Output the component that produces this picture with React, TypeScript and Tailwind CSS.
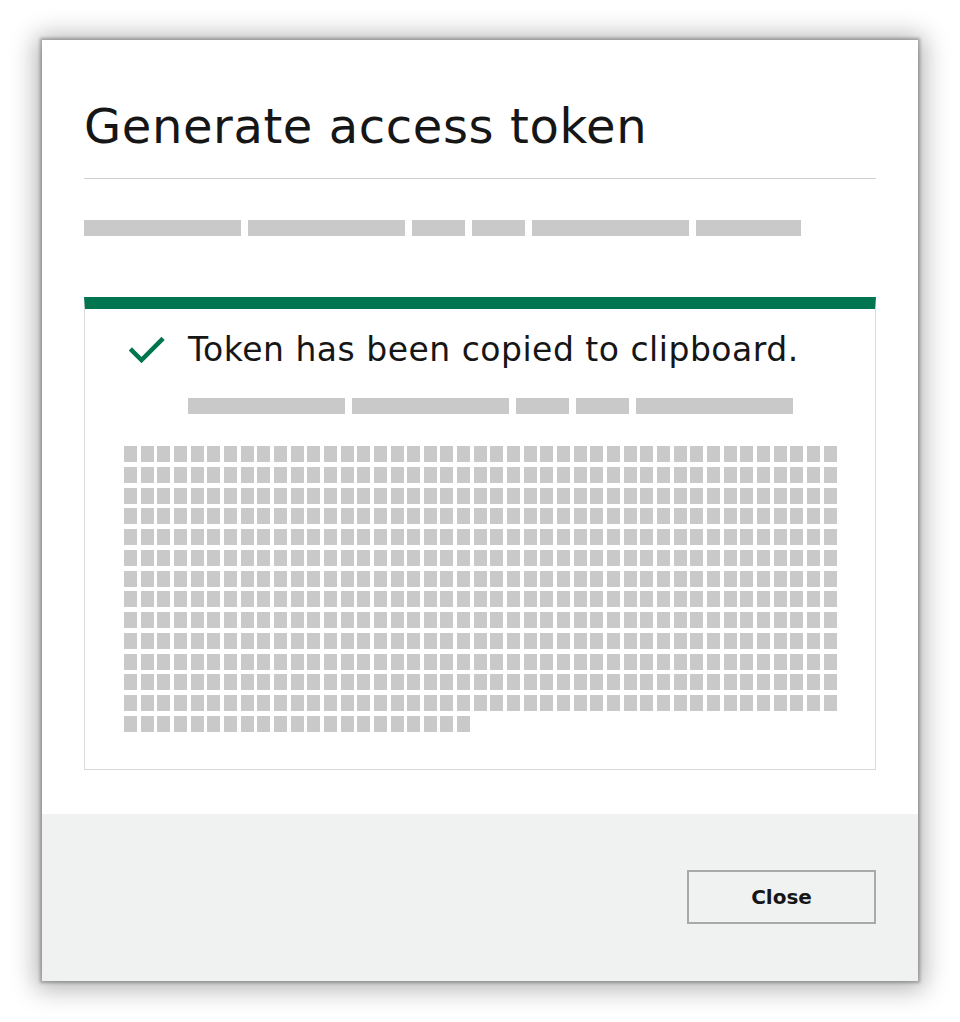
const font = { fontFamily: "'DejaVu Sans', 'Open Sans', sans-serif" };

function Redacted({ widths }: { widths: number[] }) {
  return (
    <div className="flex h-[16px] gap-[7.5px]">
      {widths.map((w, i) => (
        <div key={i} className="h-full bg-[#c9c9c9]" style={{ width: w }} />
      ))}
    </div>
  );
}

export default function App() {
  const blocks = 43 * 13 + 21;

  return (
    <div className="min-h-screen bg-white px-[42px] pt-[40px]" style={font}>
      <div className="w-[876px] bg-white shadow-[0_0_3px_2px_rgba(0,0,0,0.28),0_2px_24px_6px_rgba(0,0,0,0.3)]">
        <div className="px-[42px] pt-[56px] pb-[44px]">
          <h1 className="border-b border-[#cfcfcf] pb-[22px] text-[48px] leading-[60px] font-normal tracking-[0.6px] text-[#161616]">
            Generate access token
          </h1>

          <div className="mt-[41px]">
            <Redacted widths={[156.5, 156.5, 52.5, 52.5, 156.5, 104.5]} />
          </div>

          <div className="mt-[61px] border border-t-[12px] border-[#d9d9d9] border-t-[#00754f] pb-[37px]">
            <div className="flex items-center pt-[21px] pl-[44px]">
              <svg width="36" height="28" viewBox="0 0 36 28" className="shrink-0" fill="none">
                <path d="M3 14.5 L12.5 24 L32.5 4" stroke="#00754f" strokeWidth="4.5" strokeLinecap="square" />
              </svg>
              <span className="ml-[23px] text-[33px] leading-[40px] tracking-[0.5px] text-[#161616]">
                Token has been copied to clipboard.
              </span>
            </div>

            <div className="mt-[28px] pl-[103px]">
              <Redacted widths={[156.5, 156.5, 52.5, 52.5, 156.5]} />
            </div>

            <div className="mt-[32px] grid grid-cols-[repeat(43,13px)] gap-x-[3.67px] gap-y-[4.77px] pl-[39px]">
              {Array.from({ length: blocks }).map((_, i) => (
                <div key={i} className="h-[16px] w-[13px] bg-[#c9c9c9]" />
              ))}
            </div>
          </div>
        </div>

        <div className="flex h-[167px] items-center justify-end bg-[#f0f2f1] px-[42px]">
          <button className="h-[54px] w-[189px] border-2 border-[#a9a9a9] bg-[#f0f2f1] text-[20px] font-bold text-[#161616]">
            Close
          </button>
        </div>
      </div>
    </div>
  );
}
